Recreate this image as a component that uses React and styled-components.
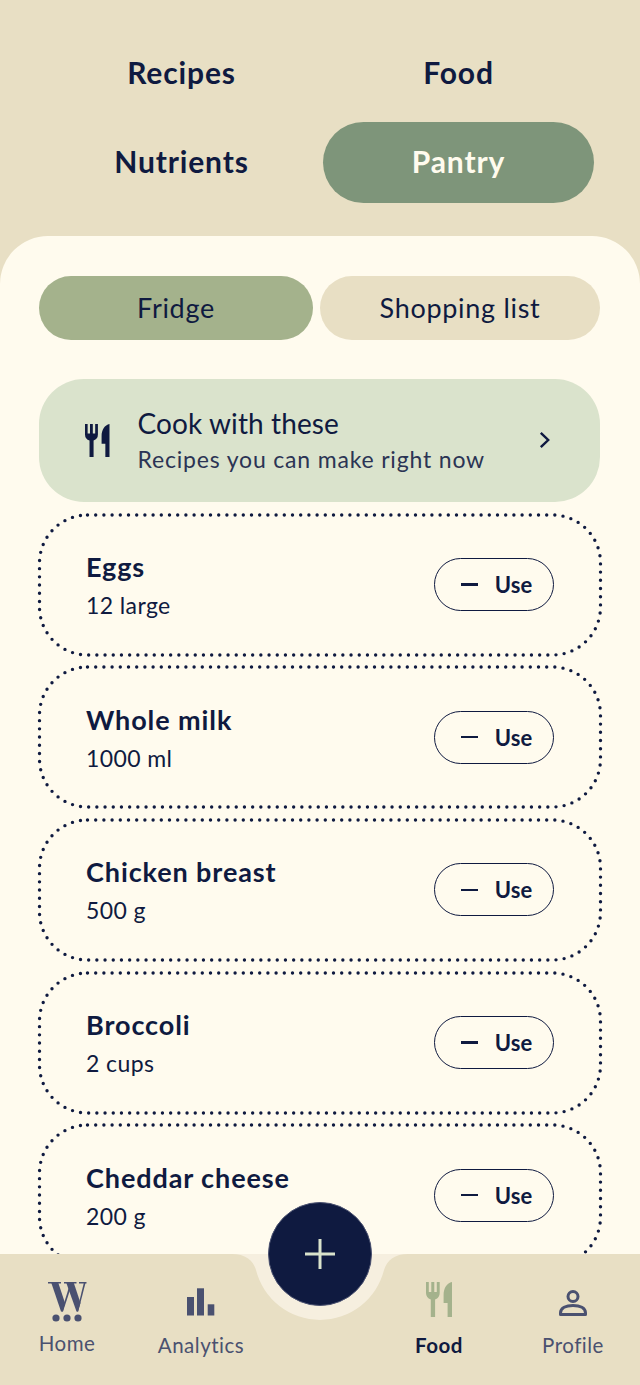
import styled, { createGlobalStyle } from 'styled-components';

const navy = '#0f1a40';
const slate = '#4a5170';
const sand = '#e8dfc4';
const cream = '#fffbee';

const GlobalStyle = createGlobalStyle`
  * { box-sizing: border-box; }
  html, body { margin: 0; padding: 0; background: ${sand}; }
  body { font-family: Lato, 'Noto Sans', sans-serif; color: ${navy}; }
`;

const Screen = styled.div`
  width: 640px;
  height: 1385px;
  display: flex;
  flex-direction: column;
  overflow: hidden;
  background: ${sand};
`;

const TopTabs = styled.div`
  display: grid;
  grid-template-columns: 271px 271px;
  grid-auto-rows: 81px;
  column-gap: 6px;
  row-gap: 8px;
  padding: 33px 46px;
`;

const TopTab = styled.div`
  display: flex;
  align-items: center;
  justify-content: center;
  padding-bottom: 4px;
  border-radius: 41px;
  font-size: 30px;
  font-weight: 700;
  letter-spacing: 0.85px;
  background: ${props => props.$active ? '#7e957a' : 'transparent'};
  color: ${props => props.$active ? cream : navy};
`;

const Sheet = styled.main`
  flex: 1;
  min-height: 0;
  overflow: hidden;
  background: ${cream};
  border-radius: 48px 48px 0 0;
  padding: 40px 40px 0 39px;
`;

const Segments = styled.div`
  display: grid;
  grid-template-columns: 274px 1fr;
  gap: 7px;
`;

const Segment = styled.div`
  height: 63.5px;
  border-radius: 32px;
  display: flex;
  align-items: center;
  justify-content: center;
  font-size: 27px;
  letter-spacing: 0.7px;
  background: ${props => props.$active ? '#a4b28c' : sand};
`;

const CookCard = styled.div`
  height: 122.5px;
  margin-top: 39.5px;
  border-radius: 45px;
  background: #dae3cc;
  display: flex;
  align-items: center;
  padding: 0 49px 0 46px;
`;

const CookText = styled.div`
  flex: 1;
  margin-left: 28px;
  display: flex;
  flex-direction: column;
  gap: 6px;
`;

const CookTitle = styled.div`
  font-size: 28px;
  line-height: 32px;
  letter-spacing: 0.1px;
`;

const CookSub = styled.div`
  font-size: 23px;
  line-height: 28px;
  letter-spacing: 0.82px;
  color: #2b3454;
`;

const ItemList = styled.div`
  margin-top: 13px;
  display: flex;
  flex-direction: column;
  gap: 12.7px;
`;

const ItemCard = styled.div`
  position: relative;
  flex: none;
  height: 140px;
  display: flex;
  align-items: center;
  justify-content: space-between;
  padding: 0 46px 0 47px;
`;

const DottedOutline = styled.svg`
  position: absolute;
  inset: 0;
  width: 100%;
  height: 100%;
  overflow: visible;
`;

const ItemText = styled.div`
  display: flex;
  flex-direction: column;
  gap: 8px;
`;

const ItemName = styled.div`
  font-size: 27px;
  line-height: 33px;
  font-weight: 700;
  letter-spacing: 0.9px;
`;

const ItemAmount = styled.div`
  font-size: 23px;
  line-height: 28px;
  letter-spacing: 0.4px;
`;

const UseButton = styled.button`
  width: 120px;
  height: 53px;
  border: 1.8px solid ${navy};
  border-radius: 27px;
  background: transparent;
  color: ${navy};
  display: flex;
  align-items: center;
  justify-content: center;
  gap: 17px;
  padding: 0 0 0 5px;
  font-family: inherit;
  font-size: 22px;
  font-weight: 700;
`;

const Minus = styled.span`
  width: 17px;
  height: 2.4px;
  background: ${navy};
`;

const BottomNav = styled.nav`
  position: relative;
  flex: none;
  height: 131px;
  background: ${sand};
  display: grid;
  grid-template-columns: 134px 134px 1fr 134px 134px;
  padding-top: 28px;
`;

const NavItem = styled.div`
  display: flex;
  flex-direction: column;
  align-items: center;
  gap: 8px;
  grid-column: ${props => props.$column};
  color: ${props => props.$active ? navy : slate};
  font-size: 20.5px;
  line-height: 26px;
  letter-spacing: 0.5px;
  font-weight: ${props => props.$active ? 700 : 400};
`;

const NavIconBox = styled.div`
  height: ${props => props.$short ? '40px' : '42px'};
  display: flex;
  align-items: flex-start;
  justify-content: center;
  color: ${props => props.$tint || 'inherit'};
`;

const Notch = styled.svg`
  position: absolute;
  left: 220px;
  top: 0;
  width: 200px;
  height: 66px;
`;

const Fab = styled.button`
  position: absolute;
  left: 267.7px;
  top: -52.3px;
  width: 104.6px;
  height: 104.6px;
  border-radius: 50%;
  border: 1.5px solid #4a5170;
  background: ${navy};
  display: flex;
  align-items: center;
  justify-content: center;
  padding: 0;
`;

function CutleryIcon({ width, height }) {
  return (
    <svg width={width} height={height} viewBox="0 0 26 35" fill="currentColor">
      <path d="M0 0h2.8v10h2.5V0h3v10h2.5V0h2.9v11a6.8 6.8 0 0 1-4.6 6.4V35H4.8V17.4A6.8 6.8 0 0 1 0 11z" />
      <path d="M26 0V35H21.6V21H17.6V13C17.6 6 21 1 26 0z" />
    </svg>
  );
}

function Chevron() {
  return (
    <svg width="12" height="18" viewBox="0 0 12 18" fill="none" stroke={navy} strokeWidth="2.4">
      <path d="M1.8 1.8l7.4 7.2-7.4 7.2" />
    </svg>
  );
}

function WLogo() {
  return (
    <svg width="39" height="40" viewBox="0 0 39 40" fill="currentColor">
      <path d="M3 0H10L17 21 14.8 29.5H13z" />
      <path d="M13.5 29.5H15L22 8 21 5z" />
      <path d="M18 0H25.5L32.5 21 30 29.5H28.5z" />
      <path d="M28.8 29.5H30.2L37.5 1H35.8z" />
      <rect x="0" y="0" width="13" height="1.5" />
      <rect x="16" y="0" width="12.5" height="1.5" />
      <rect x="31" y="0" width="7.5" height="1.5" />
      <circle cx="8" cy="36" r="3.6" />
      <circle cx="19" cy="36" r="3.6" />
      <circle cx="30" cy="36" r="3.6" />
    </svg>
  );
}

function BarsIcon() {
  return (
    <svg width="28" height="34" viewBox="0 0 28 34" fill="currentColor" style={{ marginTop: 6 }}>
      <rect x="0" y="9" width="7" height="18.5" />
      <rect x="10" y="0.3" width="7" height="27.2" />
      <rect x="20.7" y="16.3" width="6.6" height="11.2" />
    </svg>
  );
}

function ProfileIcon() {
  return (
    <svg width="30" height="36" viewBox="0 0 30 36" fill="none" stroke="currentColor" strokeWidth="3" strokeLinejoin="round" style={{ marginTop: 5 }}>
      <circle cx="15" cy="9.5" r="5" />
      <path d="M2.5 27.5V26C2.5 21 8 18.5 15 18.5S27.5 21 27.5 26V27.5z" />
    </svg>
  );
}

const items = [
  { name: 'Eggs', amount: '12 large' },
  { name: 'Whole milk', amount: '1000 ml' },
  { name: 'Chicken breast', amount: '500 g' },
  { name: 'Broccoli', amount: '2 cups' },
  { name: 'Cheddar cheese', amount: '200 g' },
];

export default function App() {
  return (
    <Screen>
      <GlobalStyle />
      <TopTabs>
        <TopTab>Recipes</TopTab>
        <TopTab>Food</TopTab>
        <TopTab>Nutrients</TopTab>
        <TopTab $active>Pantry</TopTab>
      </TopTabs>

      <Sheet>
        <Segments>
          <Segment $active>Fridge</Segment>
          <Segment>Shopping list</Segment>
        </Segments>

        <CookCard>
          <CutleryIcon width={24.5} height={33} />
          <CookText>
            <CookTitle>Cook with these</CookTitle>
            <CookSub>Recipes you can make right now</CookSub>
          </CookText>
          <Chevron />
        </CookCard>

        <ItemList>
          {items.map(item => (
            <ItemCard key={item.name}>
              <DottedOutline>
                <rect
                  x="0.5"
                  y="0"
                  width="561"
                  height="140"
                  rx="48"
                  fill="none"
                  stroke={navy}
                  strokeWidth="3.4"
                  strokeLinecap="round"
                  strokeDasharray="0 8.2"
                />
              </DottedOutline>
              <ItemText>
                <ItemName>{item.name}</ItemName>
                <ItemAmount>{item.amount}</ItemAmount>
              </ItemText>
              <UseButton><Minus />Use</UseButton>
            </ItemCard>
          ))}
        </ItemList>
      </Sheet>

      <BottomNav>
        <Notch viewBox="0 0 200 66">
          <path d="M12 0C25 0 33 6 36 16A66 66 0 0 0 164 16C167 6 175 0 188 0z" fill="#f6efdf" />
        </Notch>
        <NavItem $column={1}>
          <NavIconBox $short><WLogo /></NavIconBox>
          Home
        </NavItem>
        <NavItem $column={2}>
          <NavIconBox><BarsIcon /></NavIconBox>
          Analytics
        </NavItem>
        <NavItem $column={4} $active>
          <NavIconBox $tint="#a4b28c"><CutleryIcon width={26} height={35} /></NavIconBox>
          Food
        </NavItem>
        <NavItem $column={5}>
          <NavIconBox><ProfileIcon /></NavIconBox>
          Profile
        </NavItem>
        <Fab>
          <svg width="30" height="30" viewBox="0 0 30 30" stroke="#dae3cc" strokeWidth="3">
            <path d="M0 15H30M15 0V30" />
          </svg>
        </Fab>
      </BottomNav>
    </Screen>
  );
}
